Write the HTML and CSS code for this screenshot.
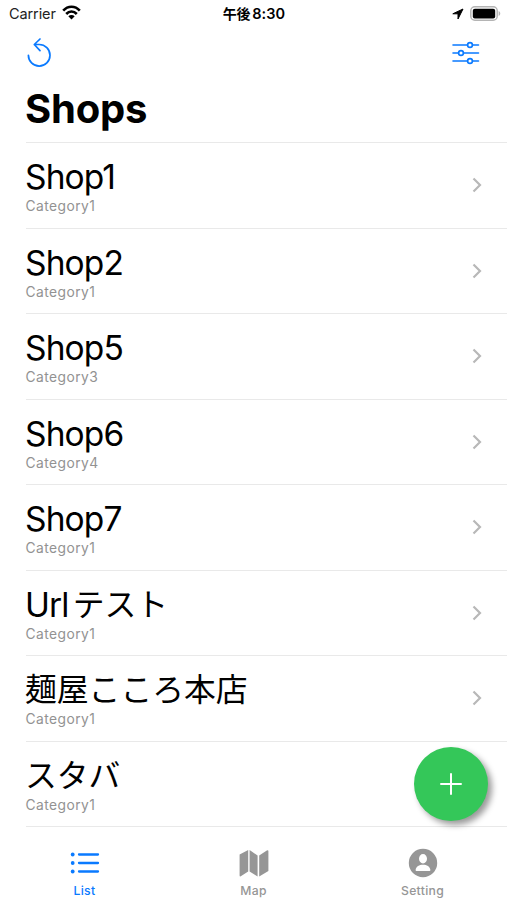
FILE: index.html
```html
<!DOCTYPE html>
<html lang="ja">
<head>
<meta charset="utf-8">
<title>Shops</title>
<link rel="stylesheet" href="styles.css">
</head>
<body>
<div class="screen">
  <header class="status">
    <div class="carrier"><span>Carrier</span>
      <svg width="19" height="15" viewBox="0 0 19 15" fill="none" stroke="#000" stroke-width="2.600"><path d="M1.200 5.600C6 .4 13 .4 17.800 5.600M4.200 9c3.100-3.300 7.500-3.300 10.600 0"/><path d="M6.300 11.200c1.900-1.700 4.500-1.700 6.400 0L9.500 14.500z" fill="#000" stroke="none"/></svg>
    </div>
    <div class="time"><span class="ampm">午後</span><span>8:30</span></div>
    <div class="power">
      <svg width="12" height="12" viewBox="0 0 12 12"><path d="M11 1 .8 5.800h5.200V11z" fill="#000" stroke="#000" stroke-width="1" stroke-linejoin="round"/></svg>
      <svg width="31" height="15" viewBox="0 0 31 15"><rect x=".8" y=".8" width="26.400" height="13.400" rx="4" fill="#fff" stroke="#b4b4b4" stroke-width="1.500"/><rect x="2.800" y="2.700" width="22.400" height="9.800" rx="2"/><path d="M28.600 5c2.200.7 2.200 4.300 0 5z" fill="#b4b4b4"/></svg>
    </div>
  </header>
  <nav class="toolbar">
    <svg width="26" height="30" viewBox="0 0 26 30" fill="none" stroke="#0a7aff" stroke-width="1.700" stroke-linecap="round" stroke-linejoin="round"><path d="M2.400 18.300A10.800 10.800 0 1 0 13.200 7.500H8.300M14 2 8.300 7.500 14 13.600"/></svg>
    <svg width="28" height="24" viewBox="0 0 28 24" fill="none" stroke="#0a7aff" stroke-width="1.600" stroke-linecap="round"><path d="M1 4h14.500M20.500 4H26.500M1 12h5.500M11.500 12h15M1 20h14.500M20.500 20H26.500"/><circle cx="18" cy="4" r="2.400"/><circle cx="9" cy="12" r="2.400"/><circle cx="18" cy="20" r="2.400"/></svg>
  </nav>
  <h1 class="title">Shops</h1>
  <main class="list">
    <div class="row"><div><div class="name">Shop1</div><div class="category">Category1</div></div><svg class="chevron" viewBox="0 0 10 16"><path d="m1.500 1.500 6.500 6.500-6.500 6.500"/></svg></div>
    <div class="row"><div><div class="name">Shop2</div><div class="category">Category1</div></div><svg class="chevron" viewBox="0 0 10 16"><path d="m1.500 1.500 6.500 6.500-6.500 6.500"/></svg></div>
    <div class="row"><div><div class="name">Shop5</div><div class="category">Category3</div></div><svg class="chevron" viewBox="0 0 10 16"><path d="m1.500 1.500 6.500 6.500-6.500 6.500"/></svg></div>
    <div class="row"><div><div class="name">Shop6</div><div class="category">Category4</div></div><svg class="chevron" viewBox="0 0 10 16"><path d="m1.500 1.500 6.500 6.500-6.500 6.500"/></svg></div>
    <div class="row"><div><div class="name">Shop7</div><div class="category">Category1</div></div><svg class="chevron" viewBox="0 0 10 16"><path d="m1.500 1.500 6.500 6.500-6.500 6.500"/></svg></div>
    <div class="row"><div><div class="name">Url<span class="jp after-latin">テスト</span></div><div class="category">Category1</div></div><svg class="chevron" viewBox="0 0 10 16"><path d="m1.500 1.500 6.500 6.500-6.500 6.500"/></svg></div>
    <div class="row"><div><div class="name"><span class="jp">麺屋こころ本店</span></div><div class="category">Category1</div></div><svg class="chevron" viewBox="0 0 10 16"><path d="m1.500 1.500 6.500 6.500-6.500 6.500"/></svg></div>
    <div class="row"><div><div class="name"><span class="jp">スタバ</span></div><div class="category">Category1</div></div></div>
  </main>
  <button class="add" aria-label="Add"><svg width="22" height="22" viewBox="0 0 22 22" stroke="#fff" stroke-width="2" stroke-linecap="round"><path d="M11 1v20M1 11h20"/></svg></button>
  <footer class="tabs">
    <div class="tab active">
      <svg width="30" height="30" viewBox="0 0 30 30" fill="none" stroke="currentColor" stroke-width="2.300" stroke-linecap="round"><path d="M9 6.500h19M9 15h19M9 23.500h19"/><g fill="currentColor" stroke="none"><circle cx="2.700" cy="6.500" r="1.900"/><circle cx="2.700" cy="15" r="1.900"/><circle cx="2.700" cy="23.500" r="1.900"/></g></svg>
      <span>List</span>
    </div>
    <div class="tab">
      <svg width="30" height="30" viewBox="0 0 30 30" fill="currentColor"><path d="M.6 6.500 9.200 2v21.500l-7.400 4.800q-1.200.5-1.200-.8zM10.600 2l8 5.500v21L10.600 23.500zM20.200 7.500l7.600-5q1.600-.8 1.600.8v19.800l-9.200 5.400z"/></svg>
      <span>Map</span>
    </div>
    <div class="tab">
      <svg width="30" height="30" viewBox="0 0 30 30"><circle cx="15" cy="15" r="14.200" fill="currentColor"/><ellipse cx="15" cy="10.800" rx="4" ry="4.700" fill="#fff"/><path d="M7.600 22c.4-3.300 3.600-5.200 7.400-5.200s7 1.900 7.400 5.200q0 1-.8 1H8.400q-.8 0-.8-1z" fill="#fff"/></svg>
      <span>Setting</span>
    </div>
  </footer>
</div>
</body>
</html>
```
FILE: styles.css
```css
* { box-sizing: border-box; }
body { margin: 0; background: #fff; }
.screen {
  position: relative;
  width: 507px;
  height: 900px;
  overflow: hidden;
  display: flex;
  flex-direction: column;
  color: #000;
  font-family: Inter, "Noto Sans CJK JP", sans-serif;
}
svg { display: block; flex: none; }
.status, .toolbar, .title, .list { flex-shrink: 0; }
.status {
  height: 27px;
  padding: 0 6px 0 9px;
  display: grid;
  grid-template-columns: 1fr auto 1fr;
  align-items: center;
  font-size: 14.500px;
  line-height: 27px;
}
.carrier, .time, .power { display: flex; align-items: center; }
.carrier { gap: 6px; color: #222; letter-spacing: -.1px; }
.carrier svg { margin-top: -2px; }
.time { gap: 2px; font-weight: 600; margin-right: 2px; letter-spacing: .1px; }
.ampm { font-size: 14px; font-weight: 700; letter-spacing: -.3px; }
.power { justify-content: flex-end; gap: 6px; }
.toolbar {
  height: 51px;
  padding: 10px 27px 0 26px;
  display: flex;
  justify-content: space-between;
  align-items: flex-start;
}
.toolbar svg:last-child { margin-top: 4px; }
.title {
  height: 64px;
  margin: 0;
  padding-left: 25px;
  font-size: 40px;
  line-height: 62px;
  font-weight: 700;
  letter-spacing: -.2px;
}
.list { margin-left: 26px; border-top: 1px solid #e9e9e9; }
.row {
  height: 85.530px;
  padding: 13px 25px 0 0;
  border-bottom: 1px solid #e9e9e9;
  display: flex;
  justify-content: space-between;
}
.name {
  height: 42px;
  margin-left: -1px;
  font-size: 33.500px;
  line-height: 42px;
  letter-spacing: -.85px;
  white-space: nowrap;
}
.jp {
  display: inline-block;
  font-family: "Noto Sans CJK JP", sans-serif;
  font-size: 31.800px;
  font-weight: 400;
  line-height: 37px;
  letter-spacing: 0;
  vertical-align: top;
}
.after-latin { margin-left: 4px; }
.category { margin-left: -.5px; font-size: 13.800px; line-height: 17px; color: #929292; letter-spacing: .45px; }
.chevron { width: 10px; height: 16px; margin-top: 21px; fill: none; stroke: #b8b8b8; stroke-width: 2.200; }
.add {
  position: absolute;
  left: 414px;
  top: 747px;
  width: 74px;
  height: 74px;
  padding: 0;
  border: 0;
  border-radius: 50%;
  background: #34c759;
  box-shadow: 4px 4px 6px rgba(0, 0, 0, .4);
  display: grid;
  place-items: center;
}
.tabs {
  flex: 1;
  padding-top: 21px;
  display: grid;
  grid-template-columns: repeat(3, 1fr);
}
.tab {
  display: flex;
  flex-direction: column;
  align-items: center;
  gap: 5px;
  color: #969696;
  font-size: 12.200px;
  line-height: 16px;
  font-weight: 500;
  letter-spacing: .3px;
}
.active { color: #0a7aff; }
```
